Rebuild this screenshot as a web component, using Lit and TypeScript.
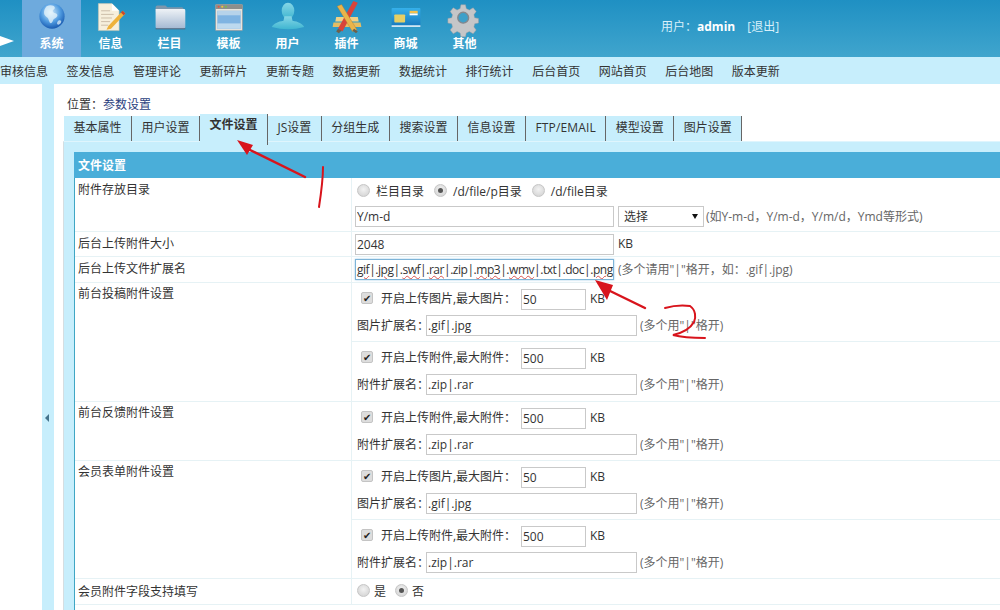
import { LitElement, css, html, svg } from 'lit';
import { customElement } from 'lit/decorators.js';

const ICONS = {
  globe: svg`
    <defs><radialGradient id="g1" cx="45%" cy="35%" r="70%"><stop offset="0" stop-color="#d9f0fb"/><stop offset=".55" stop-color="#4f9be0"/><stop offset="1" stop-color="#0f4fa8"/></radialGradient></defs>
    <circle cx="20" cy="16" r="14" fill="url(#g1)"/>
    <path d="M14 5c4-2 8-1 9 1s-3 3-2 5 5 1 5 4-4 3-5 6-3 4-4 1-1-4-4-6-2-8 1-11z" fill="#e8f5fb" opacity=".75"/>
    <path d="M27 21c2-1 4 0 3 2s-3 3-4 2 0-3 1-4z" fill="#e8f5fb" opacity=".7"/>`,
  doc: svg`
    <path d="M6 2h15l8 8v22H6z" fill="#f6efdc" stroke="#c9c3b0" stroke-width=".6"/>
    <path d="M21 2l8 8h-8z" fill="#fff"/>
    <path d="M9 10h10M9 14h14M9 18h12M9 22h10M9 26h8" stroke="#c7b9a4" stroke-width="1"/>
    <path d="M17 27l16-17 3 3-16 17-5 1z" fill="#eeb23a"/>
    <path d="M31 12l2-2 3 3-2 2z" fill="#c8452f"/>`,
  folder: svg`
    <defs><linearGradient id="g2" x1="0" y1="0" x2="0" y2="1"><stop offset="0" stop-color="#eef2f6"/><stop offset="1" stop-color="#a3b8d2"/></linearGradient></defs>
    <path d="M4 6q0-2 2-2h9l2 2h16q2 0 2 2v3H4z" fill="#7d96ab"/>
    <path d="M4 8h32q1 0 1 2v18q0 2-2 2H6q-2 0-2-2z" fill="url(#g2)"/>
    <path d="M4 30h33" stroke="#54687f" stroke-width="1.2"/>`,
  window: svg`
    <rect x="5" y="3" width="30" height="29" rx="1" fill="#e7e4dc" stroke="#8b9096" stroke-width=".7"/>
    <rect x="5" y="3" width="30" height="5" fill="#8d8f8c"/>
    <circle cx="8.5" cy="5.5" r="1.2" fill="#e6563f"/><circle cx="12.5" cy="5.5" r="1.2" fill="#eec33b"/><circle cx="16.5" cy="5.5" r="1.2" fill="#7dbb4a"/>
    <rect x="7" y="10" width="26" height="20" fill="#7fb4e2"/>
    <rect x="7" y="10" width="26" height="5" fill="#b6d3ea"/>
    <rect x="7" y="24" width="26" height="6" fill="#bcd9ef"/>`,
  user: svg`
    <defs><linearGradient id="g3" x1="0" y1="0" x2="0" y2="1"><stop offset="0" stop-color="#86d6e6"/><stop offset="1" stop-color="#3fb6d1"/></linearGradient></defs>
    <ellipse cx="20" cy="10" rx="7" ry="9" fill="url(#g3)"/>
    <path d="M16 16h8l1 5c6 1 11 3 13 7q-18 5-36 0c2-4 7-6 13-7z" fill="url(#g3)"/>`,
  plugin: svg`
    <path d="M5 23h30l1 5H4z" fill="#e4bd63"/>
    <path d="M8 17h24l1 5H7z" fill="#f0d186"/>
    <path d="M10 30L27 -1l5 2-17 32z" fill="#d8443a"/>
    <path d="M31 31L14 3l-5 2 17 28z" fill="#e9b44a" stroke="#a9742a" stroke-width=".4"/>
    <path d="M8 33l2-3 4 2-3 3z" fill="#6e604a"/>
    <path d="M32 33l-4-3-2 2 4 3z" fill="#6e604a"/>`,
  card: svg`
    <defs><linearGradient id="g4" x1="0" y1="0" x2="0" y2="1"><stop offset="0" stop-color="#35b0ea"/><stop offset="1" stop-color="#1677bd"/></linearGradient></defs>
    <rect x="4" y="7" width="32" height="21" rx="1" fill="url(#g4)"/>
    <path d="M4 26h32v2H4z" fill="#cfe6f3"/>
    <rect x="7" y="14" width="12" height="9" rx="1" fill="#e6cf64"/>
    <rect x="24" y="10" width="9" height="3" fill="#f2c04c"/>
    <rect x="24" y="13" width="9" height="2" fill="#fff"/>`,
  gear: svg`
    <path d="M17 5h6l1 5 4 2 5-3 4 5-3 4 1 4 5 1v6l-5 1-1 4 3 4-4 5-5-3-4 2-1 5h-6l-1-5-4-2-5 3-4-5 3-4-1-4-5-1v-6l5-1 1-4-3-4 4-5 5 3 4-2z" transform="translate(1 -1) scale(.85)" fill="#c5c6c8" stroke="#9a9ca0" stroke-width=".6"/>
    <circle cx="18" cy="17.7" r="6" fill="#3ea0c9" stroke="#85888d" stroke-width="1.6"/>`,
};

const NAV = [
  { label: '系统', icon: ICONS.globe, active: true },
  { label: '信息', icon: ICONS.doc },
  { label: '栏目', icon: ICONS.folder },
  { label: '模板', icon: ICONS.window },
  { label: '用户', icon: ICONS.user },
  { label: '插件', icon: ICONS.plugin },
  { label: '商城', icon: ICONS.card },
  { label: '其他', icon: ICONS.gear },
];

const SUBNAV = ['审核信息', '签发信息', '管理评论', '更新碎片', '更新专题', '数据更新', '数据统计', '排行统计', '后台首页', '网站首页', '后台地图', '版本更新'];

const TABS = ['基本属性', '用户设置', '文件设置', 'JS设置', '分组生成', '搜索设置', '信息设置', 'FTP/EMAIL', '模型设置', '图片设置'];

const EXT_PARTS = [
  ['gif', true], ['|.', false], ['jpg', true], ['|.', false], ['swf', true], ['|.', false], ['rar', true], ['|.', false],
  ['zip', false], ['|.', false], ['mp3', true], ['|.', false], ['wmv', true], ['|.txt|.doc|.', false], ['png', true],
] as const;

@customElement('app-root')
export class AppRoot extends LitElement {
  static styles = css`
    :host {
      display: block;
      position: relative;
      width: 1000px;
      height: 610px;
      overflow: hidden;
      background: #fff;
      color: #333;
      font: 12px/16px "Open Sans", "Noto Sans CJK SC", sans-serif;
    }

    .top {
      align-items: stretch;
      background: linear-gradient(#1f90c3, #40a5cd);
      display: flex;
      height: 57px;
    }
    .play {
      align-self: flex-end;
      border-bottom: 5px solid transparent;
      border-left: 14px solid #fff;
      border-top: 5px solid transparent;
      height: 0;
      margin-bottom: 11px;
      margin-right: 8px;
    }
    .nav-item {
      align-items: center;
      color: #fff;
      display: flex;
      flex-direction: column;
      font-weight: 700;
      width: 59px;
    }
    .nav-item.active { background: #6eaadd; }
    .nav-item svg { display: block; height: 36px; overflow: visible; width: 36px; }
    .user {
      color: #d8f0fa;
      margin-left: 167px;
      margin-top: 19px;
    }
    .user b { color: #fff; margin-right: 9px; }

    .subnav {
      background: #c7eefc;
      display: flex;
      gap: 18.5px;
      height: 27px;
      line-height: 30px;
    }

    .main {
      display: grid;
      grid-template-columns: 42px 12px minmax(0, 1fr);
      height: 526px;
    }
    .split {
      align-items: flex-start;
      background: #c7eefc;
      display: flex;
      justify-content: center;
      padding: 330px 2px 0 0;
    }
    .split i {
      border-bottom: 4px solid transparent;
      border-right: 4px solid #44738c;
      border-top: 4px solid transparent;
    }
    .content { padding: 13px 0 0 9px; }
    .crumb { height: 18px; line-height: 16px; padding-left: 4px; }
    .crumb a { color: #2b3f80; }

    .tabs { display: flex; height: 26px; padding-left: 1px; }
    .tab {
      background: #c7eefc;
      border-right: 1px solid #666;
      margin-top: 1px;
      padding: 4px 9.5px 0;
      white-space: nowrap;
    }
    .tab.on {
      font-weight: 700;
      height: 28px;
      margin-top: -1px;
      padding-top: 3px;
    }
    .tab.wide { letter-spacing: .15px; }

    .panel {
      background: #c7eefc;
      border-left: 1px solid #d5dee2;
      border-top: 1px solid #dff5fd;
      padding: 10px 0 0 10px;
      height: 470px;
    }
    .head {
      background: #4aaed9;
      color: #fff;
      font-weight: 700;
      height: 26px;
      line-height: 27px;
      padding-left: 4px;
    }
    .table { background: #fff; border-left: 1px solid #3fa6c4; height: 444px; }
    .row {
      border-bottom: 1px solid #e6f2f5;
      display: grid;
      grid-template-columns: 276px minmax(0, 1fr);
    }
    .name { padding: 4px 0 0 3px; }
    .name.up { padding-top: 3px; }
    .name.down { padding-top: 5px; }
    .cell { border-left: 1px solid #e6f2f5; }

    .line { align-items: center; display: flex; }
    .hint { color: #666; margin-left: 4px; white-space: nowrap; }
    .hint.tight { margin-left: 2px; }
    .unit { margin-left: 4px; }
    .field {
      background: #fff;
      border: 1px solid #c9c9c9;
      box-sizing: border-box;
      color: #333;
      font: inherit;
      height: 21px;
      outline: none;
      padding: 0 1px;
    }
    .field.focus {
      border-color: #7db4d8;
      box-shadow: 0 0 2px #9cc9e6;
      letter-spacing: -.46px;
      line-height: 20px;
      overflow: hidden;
      white-space: nowrap;
    }
    .bad { text-decoration: underline wavy #d9534f 1px; }
    .select {
      align-items: center;
      border: 1px solid #c9c9c9;
      box-sizing: border-box;
      display: flex;
      height: 21px;
      justify-content: space-between;
      margin-left: 4px;
      padding: 0 5px;
      width: 86px;
    }
    .select i {
      border-left: 3px solid transparent;
      border-right: 3px solid transparent;
      border-top: 5px solid #111;
    }
    .radio {
      background: radial-gradient(circle at 50% 40%, #f2f2f2, #cfcfcf);
      border: 1px solid #c6c6c6;
      border-radius: 50%;
      box-sizing: border-box;
      display: inline-block;
      flex: none;
      height: 13px;
      margin-top: -3px;
      position: relative;
      width: 13px;
    }
    .radio.on::after {
      background: #555;
      border-radius: 50%;
      content: '';
      height: 5px;
      left: 3px;
      position: absolute;
      top: 3px;
      width: 5px;
    }
    .check {
      background: #ddd;
      border: 1px solid #c4c4c4;
      border-radius: 2px;
      box-sizing: border-box;
      color: #222;
      display: inline-block;
      flex: none;
      font-size: 10px;
      height: 12px;
      line-height: 10px;
      margin-top: -2px;
      text-align: center;
      width: 12px;
    }

    .radios { height: 28px; padding: 0 0 0 5px; }
    .radios label { align-items: center; display: flex; margin-right: 10px; }
    .radios .radio { margin-right: 6px; }
    .radios.low { height: auto; }
    .radios.low label { margin-right: 9px; }
    .radios.low .radio { margin-right: 4px; }

    .block { height: 58px; padding-left: 5px; }
    .block + .block { border-top: 1px solid #e6f2f5; }
    .block .one { height: 32px; padding: 0 0 0 4px; }
    .block .one .check { margin-right: 8px; }
    .block .one .title { white-space: nowrap; width: 140px; }
    .block .one .num { width: 65px; }
    .block .two { height: 21px; }
    .block .two .lab { flex: none; white-space: nowrap; width: 69px; }
    .block .two .ext { width: 211px; }
    .block .two .hint { margin-left: 3px; }

    .marks { height: 610px; left: 0; pointer-events: none; position: absolute; top: 0; width: 1000px; }
  `;

  upload(title: string, size: string, lab: string, ext: string) {
    return html`
      <div class="block">
        <div class="line one">
          <span class="check">✔</span><span class="title">${title}</span>
          <input class="field num" .value=${size} /><span class="unit">KB</span>
        </div>
        <div class="line two">
          <span class="lab">${lab}</span><input class="field ext" .value=${ext} />
          <span class="hint">(多个用"|"格开)</span>
        </div>
      </div>
    `;
  }

  render() {
    const image = () => this.upload('开启上传图片,最大图片：', '50', '图片扩展名：', '.gif|.jpg');
    const attach = () => this.upload('开启上传附件,最大附件：', '500', '附件扩展名：', '.zip|.rar');

    return html`
      <div class="top">
        <div class="play"></div>
        ${NAV.map(
          (n) => html`
            <div class="nav-item ${n.active ? 'active' : ''}">
              <svg viewBox="0 0 40 36">${n.icon}</svg>
              <span>${n.label}</span>
            </div>
          `,
        )}
        <div class="user">用户：<b>admin</b> [退出]</div>
      </div>

      <div class="subnav">${SUBNAV.map((s) => html`<span>${s}</span>`)}</div>

      <div class="main">
        <div></div>
        <div class="split"><i></i></div>
        <div class="content">
          <div class="crumb">位置：<a>参数设置</a></div>
          <div class="tabs">
            ${TABS.map(
              (t) => html`<div class="tab ${t === '文件设置' ? 'on' : ''} ${t === 'FTP/EMAIL' ? 'wide' : ''}">${t}</div>`,
            )}
          </div>
          <div class="panel">
            <div class="head">文件设置</div>
            <div class="table">
              <div class="row" style="height:53px">
                <div class="name">附件存放目录</div>
                <div class="cell">
                  <div class="line radios">
                    <label><span class="radio"></span>栏目目录</label>
                    <label><span class="radio on"></span>/d/file/p目录</label>
                    <label><span class="radio"></span>/d/file目录</label>
                  </div>
                  <div class="line" style="padding-left:3px">
                    <input class="field" style="width:259px" .value=${'Y/m-d'} />
                    <div class="select">选择<i></i></div>
                    <span class="hint tight">(如Y-m-d，Y/m-d，Y/m/d，Ymd等形式)</span>
                  </div>
                </div>
              </div>
              <div class="row" style="height:24px">
                <div class="name">后台上传附件大小</div>
                <div class="cell line" style="padding-left:3px">
                  <input class="field" style="width:259px" .value=${'2048'} /><span class="unit">KB</span>
                </div>
              </div>
              <div class="row" style="height:25px">
                <div class="name">后台上传文件扩展名</div>
                <div class="cell line" style="padding-left:3px">
                  <div class="field focus" style="width:259px">
                    ${EXT_PARTS.map(([t, bad]) => html`<span class=${bad ? 'bad' : ''}>${t}</span>`)}
                  </div>
                  <span class="hint">(多个请用"|"格开，如：.gif|.jpg)</span>
                </div>
              </div>
              <div class="row" style="height:118px">
                <div class="name up">前台投稿附件设置</div>
                <div class="cell">${image()}${attach()}</div>
              </div>
              <div class="row" style="height:58px">
                <div class="name up">前台反馈附件设置</div>
                <div class="cell">${attach()}</div>
              </div>
              <div class="row" style="height:117px">
                <div class="name up">会员表单附件设置</div>
                <div class="cell">${image()}${attach()}</div>
              </div>
              <div class="row" style="height:25px">
                <div class="name down">会员附件字段支持填写</div>
                <div class="cell line radios low">
                  <label><span class="radio"></span>是</label>
                  <label><span class="radio on"></span>否</label>
                </div>
              </div>
            </div>
          </div>
        </div>
      </div>

      <svg class="marks" viewBox="0 0 1000 610">
        <g fill="none" stroke="#d8141c" stroke-linecap="round">
          <path d="M305 177L248 149" stroke-width="2.5"/>
          <path d="M323 167C323 180 321 194 319 207" stroke-width="2"/>
          <path d="M645 308L606 289" stroke-width="2.5"/>
          <path d="M665 308C672 306 682 305 690 306C696 310 696 318 694 322C690 329 682 333 673 335C684 338 695 338 705 338" stroke-width="2"/>
        </g>
        <path d="M237 140L253 145L247 155z" fill="#d8141c"/>
        <path d="M595 280L613 285L607 300z" fill="#d8141c"/>
      </svg>
    `;
  }
}
